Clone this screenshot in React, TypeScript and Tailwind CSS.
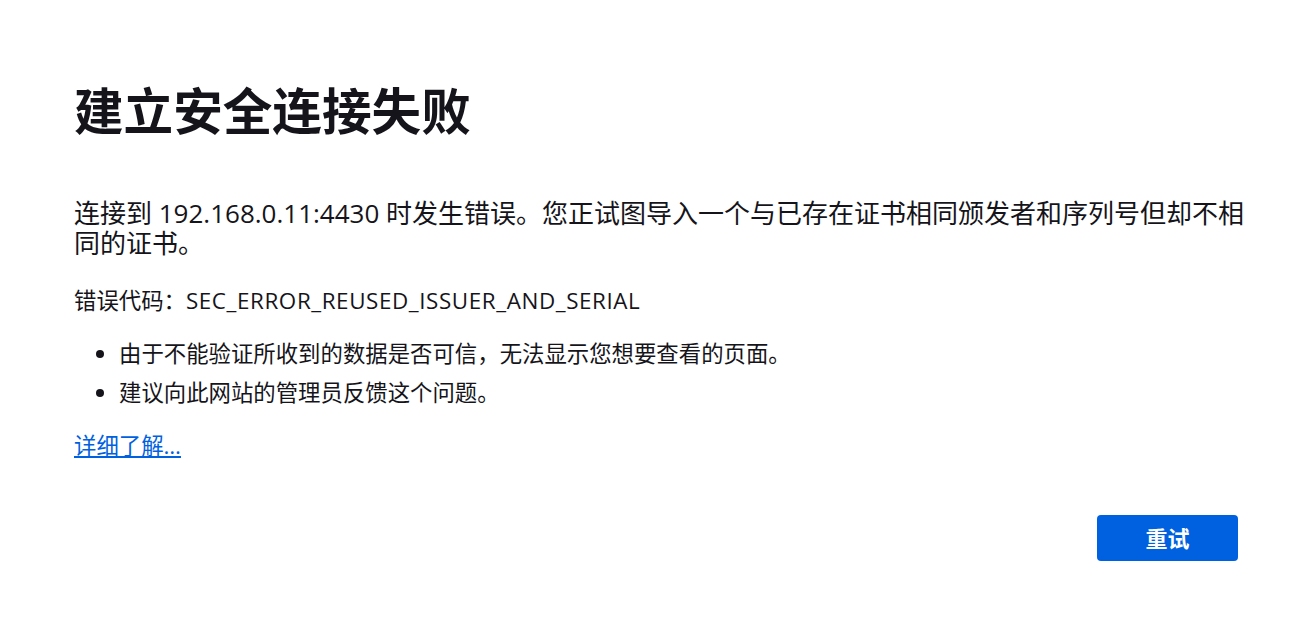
const App = () => {
  const font = { fontFamily: '"Open Sans", "Noto Sans CJK SC", sans-serif' };
  return (
    <div
      className="min-h-screen bg-white text-[#15141a] text-[22.4px]"
      style={font}
    >
      <div className="ml-[74px] w-[1182px] pt-[83px]">
        <h1 className="text-[49.6px] leading-[56px] font-bold">建立安全连接失败</h1>
        <p className="mt-[59px] text-[26px] leading-[30px]">
          连接到 192.168.0.11:4430 时发生错误。您正试图导入一个与已存在证书相同颁发者和序列号但却不相同的证书。
        </p>
        <p className="mt-[30px] leading-[26px]">
          错误代码：<span className="tracking-[0.6px]">SEC_ERROR_REUSED_ISSUER_AND_SERIAL</span>
        </p>
        <ul className="mt-[27px] list-disc pl-[45px] flex flex-col gap-[13px] leading-[26px]">
          <li>由于不能验证所收到的数据是否可信，无法显示您想要查看的页面。</li>
          <li>建议向此网站的管理员反馈这个问题。</li>
        </ul>
        <a href="#" className="mt-[27px] block w-fit leading-[26px] text-[#0061e0] underline">
          详细了解…
        </a>
        <div className="mt-[56px] flex justify-end pr-[18px]">
          <button className="w-[141px] h-[46px] rounded-[4px] bg-[#0061e0] text-white font-bold text-[22px]">
            重试
          </button>
        </div>
      </div>
    </div>
  );
};

export default App;
